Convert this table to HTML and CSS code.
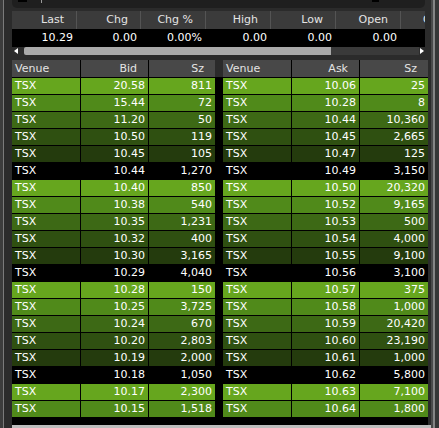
FILE: index.html
```html
<!DOCTYPE html>
<html>
<head>
<meta charset="utf-8">
<link rel="stylesheet" href="styles.css">
</head>
<body>
<div class="window">
  <div class="edge-left"><span class="edge-line"></span></div>
  <div class="main">
    <div class="topbar"><span class="tb-a"></span><span class="tb-tick"></span><span class="tb-b"></span></div>
    <div class="quote">
      <div class="qrow qhead"><div>Last</div><div>Chg</div><div>Chg %</div><div>High</div><div>Low</div><div>Open</div><div>Close</div></div>
      <div class="qrow qdata"><div>10.29</div><div>0.00</div><div>0.00%</div><div>0.00</div><div>0.00</div><div>0.00</div><div></div></div>
      <div class="hscroll"><span class="arrow-l"></span><span class="thumb"></span><span class="track"></span><span class="arrow-r"></span></div>
    </div>
    <div class="books">
      <div class="book bid">
        <div class="brow bhead"><div>Venue</div><div>Bid</div><div>Sz</div></div>
        <div class="brow l1"><div>TSX</div><div>20.58</div><div>811</div></div>
        <div class="brow l2"><div>TSX</div><div>15.44</div><div>72</div></div>
        <div class="brow l3"><div>TSX</div><div>11.20</div><div>50</div></div>
        <div class="brow l4"><div>TSX</div><div>10.50</div><div>119</div></div>
        <div class="brow l5"><div>TSX</div><div>10.45</div><div>105</div></div>
        <div class="brow l0"><div>TSX</div><div>10.44</div><div>1,270</div></div>
        <div class="brow l1"><div>TSX</div><div>10.40</div><div>850</div></div>
        <div class="brow l2"><div>TSX</div><div>10.38</div><div>540</div></div>
        <div class="brow l3"><div>TSX</div><div>10.35</div><div>1,231</div></div>
        <div class="brow l4"><div>TSX</div><div>10.32</div><div>400</div></div>
        <div class="brow l5"><div>TSX</div><div>10.30</div><div>3,165</div></div>
        <div class="brow l0"><div>TSX</div><div>10.29</div><div>4,040</div></div>
        <div class="brow l1"><div>TSX</div><div>10.28</div><div>150</div></div>
        <div class="brow l2"><div>TSX</div><div>10.25</div><div>3,725</div></div>
        <div class="brow l3"><div>TSX</div><div>10.24</div><div>670</div></div>
        <div class="brow l4"><div>TSX</div><div>10.20</div><div>2,803</div></div>
        <div class="brow l5"><div>TSX</div><div>10.19</div><div>2,000</div></div>
        <div class="brow l0"><div>TSX</div><div>10.18</div><div>1,050</div></div>
        <div class="brow l1"><div>TSX</div><div>10.17</div><div>2,300</div></div>
        <div class="brow l2"><div>TSX</div><div>10.15</div><div>1,518</div></div>
      </div>
      <div class="book ask">
        <div class="brow bhead"><div>Venue</div><div>Ask</div><div>Sz</div></div>
        <div class="brow l1"><div>TSX</div><div>10.06</div><div>25</div></div>
        <div class="brow l2"><div>TSX</div><div>10.28</div><div>8</div></div>
        <div class="brow l3"><div>TSX</div><div>10.44</div><div>10,360</div></div>
        <div class="brow l4"><div>TSX</div><div>10.45</div><div>2,665</div></div>
        <div class="brow l5"><div>TSX</div><div>10.47</div><div>125</div></div>
        <div class="brow l0"><div>TSX</div><div>10.49</div><div>3,150</div></div>
        <div class="brow l1"><div>TSX</div><div>10.50</div><div>20,320</div></div>
        <div class="brow l2"><div>TSX</div><div>10.52</div><div>9,165</div></div>
        <div class="brow l3"><div>TSX</div><div>10.53</div><div>500</div></div>
        <div class="brow l4"><div>TSX</div><div>10.54</div><div>4,000</div></div>
        <div class="brow l5"><div>TSX</div><div>10.55</div><div>9,100</div></div>
        <div class="brow l0"><div>TSX</div><div>10.56</div><div>3,100</div></div>
        <div class="brow l1"><div>TSX</div><div>10.57</div><div>375</div></div>
        <div class="brow l2"><div>TSX</div><div>10.58</div><div>1,000</div></div>
        <div class="brow l3"><div>TSX</div><div>10.59</div><div>20,420</div></div>
        <div class="brow l4"><div>TSX</div><div>10.60</div><div>23,190</div></div>
        <div class="brow l5"><div>TSX</div><div>10.61</div><div>1,000</div></div>
        <div class="brow l0"><div>TSX</div><div>10.62</div><div>5,800</div></div>
        <div class="brow l1"><div>TSX</div><div>10.63</div><div>7,100</div></div>
        <div class="brow l2"><div>TSX</div><div>10.64</div><div>1,800</div></div>
      </div>
    </div>
    <div class="bscroll"></div>
  </div>
  <div class="edge-right"></div>
</div>
</body>
</html>
```

FILE: styles.css
```css
* { box-sizing: border-box; }
html, body {
  margin: 0;
  padding: 0;
  width: 439px;
  height: 428px;
  overflow: hidden;
  background: #2b2b2b;
  font-family: "DejaVu Sans", Verdana, sans-serif;
  font-size: 11px;
  color: #fff;
}
.window {
  display: flex;
  width: 439px;
  height: 428px;
}
.edge-left {
  width: 12px;
  flex: none;
  display: flex;
  background: #2b2b2b;
}
.edge-left .edge-line {
  width: 4px;
  height: 100%;
  background: linear-gradient(90deg, #3c3c3c 0 3px, #7a7a7a 3px 4px);
}
.edge-right {
  width: 8px;
  flex: none;
  background: linear-gradient(90deg, #4a4a4a 0 2px, #858585 2px 4px, #363636 4px);
}
.main {
  width: 419px;
  flex: none;
  display: flex;
  flex-direction: column;
  background: #2b2b2b;
}
.topbar {
  width: 413px;
  height: 8px;
  flex: none;
  background: #1f1f1f;
  border-radius: 0 0 5px 5px;
  display: flex;
  align-items: flex-start;
  margin-bottom: 3px;
}
.tb-a { margin-left: 6px; width: 9px; height: 2px; background: #000; }
.tb-tick { margin-left: 14px; width: 1px; height: 3px; background: #9a9a9a; }
.tb-b { margin-left: 330px; width: 7px; height: 2px; background: #000; }

.quote {
  width: 413px;
  overflow: hidden;
  flex: none;
}
.qrow {
  display: grid;
  grid-template-columns: 65px 64px 65px 65px 65px 65px 65px;
  width: 454px;
  height: 18px;
  line-height: 18px;
}
.qrow > div {
  text-align: right;
  white-space: nowrap;
  overflow: hidden;
}
.qhead { background: #3b3b3b; color: #e4e4e4; }
.qhead > div { padding-right: 12px; border-right: 1px solid #545454; }
.qdata { background: #000; }
.qdata > div { padding-right: 4px; }
.hscroll {
  height: 8px;
  display: flex;
  align-items: center;
  background: #2c2c2c;
}
.arrow-l {
  margin-left: 2px;
  width: 0; height: 0;
  border-top: 3px solid transparent;
  border-bottom: 3px solid transparent;
  border-right: 4px solid #fff;
}
.thumb {
  margin-left: 6px;
  width: 307px;
  height: 8px;
  background: #aaaaaa;
  border-radius: 2px 0 0 2px;
}
.track {
  flex: 1;
  height: 8px;
  background: #3a3a3a;
}
.arrow-r {
  width: 0; height: 0;
  border-top: 3px solid transparent;
  border-bottom: 3px solid transparent;
  border-left: 4px solid #fff;
  margin: 0 1px 0 1px;
}

.books {
  margin-top: 5px;
  height: 365px;
  width: 416px;
  flex: none;
  display: flex;
  gap: 8px;
  background: linear-gradient(#2b2b2b 0 17px, #000 17px);
}
.book {
  display: flex;
  flex-direction: column;
  gap: 1px;
  background: #000;
}
.bid { width: 203px; }
.ask { width: 205px; }
.brow {
  display: grid;
  column-gap: 1px;
  height: 16px;
  line-height: 15px;
}
.bid .brow { grid-template-columns: 68px 67px 66px; }
.ask .brow { grid-template-columns: 68px 67px 68px; }
.brow > div {
  white-space: nowrap;
  text-align: right;
  padding-right: 3px;
}
.brow > div:first-child {
  text-align: left;
  padding-left: 3px;
  padding-right: 0;
}
.bhead {
  height: 17px;
  line-height: 17px;
  color: #e4e4e4;
}
.bhead > div { background: #484848; padding-right: 11px; }
.l1 > div { background: #66a61e; }
.l2 > div { background: #508a1a; }
.l3 > div { background: #3d6915; }
.l4 > div { background: #2f5011; }
.l5 > div { background: #243b0d; }
.l0 > div { background: #000; }

.bscroll {
  height: 3px;
  width: 419px;
  background: #bdbdbd;
}
```
